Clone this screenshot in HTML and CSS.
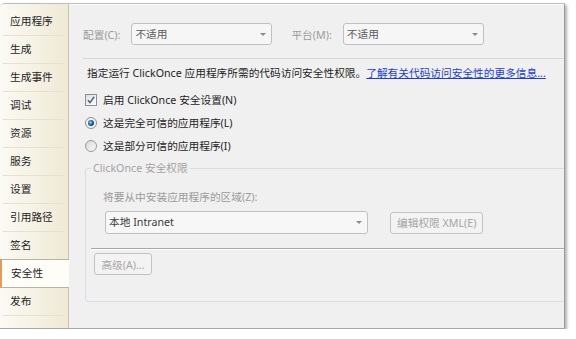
FILE: index.html
```html
<!DOCTYPE html>
<html lang="zh-CN">
<head>
  <meta charset="UTF-8" />
  <title>安全性</title>
  <link rel="stylesheet" href="styles.css">
</head>
<body>
  <div class="window">
    <ul class="tabs">
      <li>应用程序</li>
      <li>生成</li>
      <li>生成事件</li>
      <li>调试</li>
      <li>资源</li>
      <li>服务</li>
      <li>设置</li>
      <li>引用路径</li>
      <li>签名</li>
      <li class="active">安全性</li>
      <li>发布</li>
    </ul>

    <div class="panel">
      <div class="config-row">
        <span class="dim-label">配置(C):</span>
        <div class="combo combo-small"><span>不适用</span><i class="arrow"></i></div>
        <span class="dim-label platform">平台(M):</span>
        <div class="combo combo-small"><span>不适用</span><i class="arrow"></i></div>
      </div>

      <div class="rule"></div>

      <p class="intro">指定运行 ClickOnce 应用程序所需的代码访问安全性权限。<a href="#">了解有关代码访问安全性的更多信息...</a></p>

      <label class="option check-row">
        <svg class="box" width="12" height="12" viewBox="0 0 12 12">
          <defs>
            <linearGradient id="cb" x1="0" y1="0" x2="1" y2="1">
              <stop offset="0" stop-color="#dedede"/>
              <stop offset="1" stop-color="#ffffff"/>
            </linearGradient>
          </defs>
          <rect x="0.5" y="0.5" width="11" height="11" fill="url(#cb)" stroke="#8e8f8f"/>
          <path d="M3 6.2 L5 8.6 L9.2 2.8" fill="none" stroke="#4a5f97" stroke-width="1.5"/>
        </svg>
        启用 ClickOnce 安全设置(N)
      </label>

      <label class="option radio-row">
        <svg class="box" width="12" height="12" viewBox="0 0 12 12">
          <defs>
            <radialGradient id="rd" cx="0.4" cy="0.4" r="0.6">
              <stop offset="0" stop-color="#9fd8f8"/>
              <stop offset="0.6" stop-color="#1b6eb4"/>
              <stop offset="1" stop-color="#0b3d74"/>
            </radialGradient>
          </defs>
          <circle cx="6" cy="6" r="5.5" fill="#f2f2f2" stroke="#8e8f8f"/>
          <circle cx="6" cy="6" r="3" fill="url(#rd)"/>
        </svg>
        这是完全可信的应用程序(L)
      </label>

      <label class="option radio-row">
        <svg class="box" width="12" height="12" viewBox="0 0 12 12">
          <defs>
            <linearGradient id="ro" x1="0" y1="0" x2="1" y2="1">
              <stop offset="0" stop-color="#d6d6d6"/>
              <stop offset="1" stop-color="#fbfbfb"/>
            </linearGradient>
          </defs>
          <circle cx="6" cy="6" r="5.5" fill="url(#ro)" stroke="#9a9a9a"/>
        </svg>
        这是部分可信的应用程序(I)
      </label>

      <fieldset class="perm-group">
        <legend>ClickOnce 安全权限</legend>
        <div class="zone">
          <span class="dim-label">将要从中安装应用程序的区域(Z):</span>
          <div class="zone-row">
            <div class="combo combo-zone"><span>本地 Intranet</span><i class="arrow"></i></div>
            <button class="btn" disabled>编辑权限 XML(E)</button>
          </div>
        </div>
        <div class="rule rule-dark"></div>
        <button class="btn btn-adv" disabled>高级(A)...</button>
      </fieldset>
    </div>
  </div>
</body>
</html>
```

FILE: styles.css
```css
body {
  margin: 0;
  background: #ffffff;
  font-family: "Noto Sans", "Noto Sans CJK SC", sans-serif;
  font-size: 10.7px;
  color: #1e1e1e;
}
.window {
  display: flex;
  width: 564px;
  height: 324px;
  margin-top: 3px;
  border-top: 1px solid #bdbdbd;
  border-right: 1px solid #9c9c9c;
  border-bottom: 1px solid #a8a8a8;
  border-top-left-radius: 5px;
  box-shadow: 2px 2px 3px rgba(0, 0, 0, 0.3);
  overflow: hidden;
}
.tabs {
  list-style: none;
  margin: 0;
  padding: 4px 0 0;
  width: 68px;
  flex-shrink: 0;
  background: linear-gradient(to right, #fbfaf4, #efe9d5);
  border-right: 1px solid #c9c3ad;
  position: relative;
  z-index: 1;
}
.tabs li {
  height: 27px;
  line-height: 27px;
  border-bottom: 1px solid #e6e0cc;
  margin: 0 5px 0 3px;
  padding-left: 7px;
}
.tabs li.active {
  margin: -1px -1px 0 0;
  padding-left: 9px;
  height: 27px;
  background: #fefdf8;
  border-top: 1px solid #b9b4a2;
  border-bottom: 1px solid #b9b4a2;
  border-left: 2px solid #e79a57;
}
.panel {
  flex: 1;
  background: #f0f0f0;
  padding: 18px 0 0 14px;
  overflow: hidden;
  border-top: 1px solid #ffffff;
}
.config-row {
  display: flex;
  align-items: center;
  height: 22px;
}
.dim-label {
  color: #9b9b9b;
}
.platform {
  margin-left: 19px;
}
.combo {
  position: relative;
  box-sizing: border-box;
  height: 22px;
  line-height: 20px;
  border: 1px solid #c0c0c0;
  border-radius: 3px;
  background: #f6f6f6;
  color: #5c5c5c;
  padding-left: 3px;
}
.combo-small {
  width: 141px;
  margin-left: 11px;
}
.arrow {
  position: absolute;
  right: 5px;
  top: 9px;
  border-left: 3px solid transparent;
  border-right: 3px solid transparent;
  border-top: 3px solid #8a8a8a;
}
.rule {
  height: 1px;
  background: #d3d9df;
  margin: 13px 0 0;
}
.intro {
  margin: 6px 0 0 4px;
  line-height: 16px;
  white-space: nowrap;
}
.intro a {
  color: #1f3fc6;
  text-decoration: underline;
}
.option {
  display: flex;
  align-items: center;
  gap: 6px;
  line-height: 16px;
  margin-left: 2px;
}
.check-row {
  margin-top: 11px;
}
.radio-row {
  margin-top: 7px;
}
.perm-group {
  margin: 6px -20px 0 2px;
  padding: 0 0 24px 5px;
  border: 1px solid #d5dee5;
  border-radius: 3px;
  height: 116px;
}
.perm-group legend {
  color: #a3a3a3;
  padding: 0 2px;
  margin-left: 0;
  line-height: 16px;
}
.zone {
  padding: 13px 0 0 12px;
}
.zone-row {
  display: flex;
  align-items: center;
  gap: 22px;
  margin-top: 7px;
}
.combo-zone {
  width: 263px;
  height: 23px;
  margin-left: 2px;
  color: #3a3a3a;
  background: #f7f7f7;
}
.btn {
  font: inherit;
  color: #a6a6a6;
  background: #f3f3f3;
  border: 1px solid #c3c3c3;
  border-radius: 3px;
  height: 22px;
  padding: 0 6px;
}
.rule-dark {
  background: #a8a8a8;
  box-shadow: 0 1px 0 #ffffff;
  margin-top: 14px;
}
.btn-adv {
  margin: 4px 0 0 3px;
  width: 58px;
  padding: 0;
}
```
